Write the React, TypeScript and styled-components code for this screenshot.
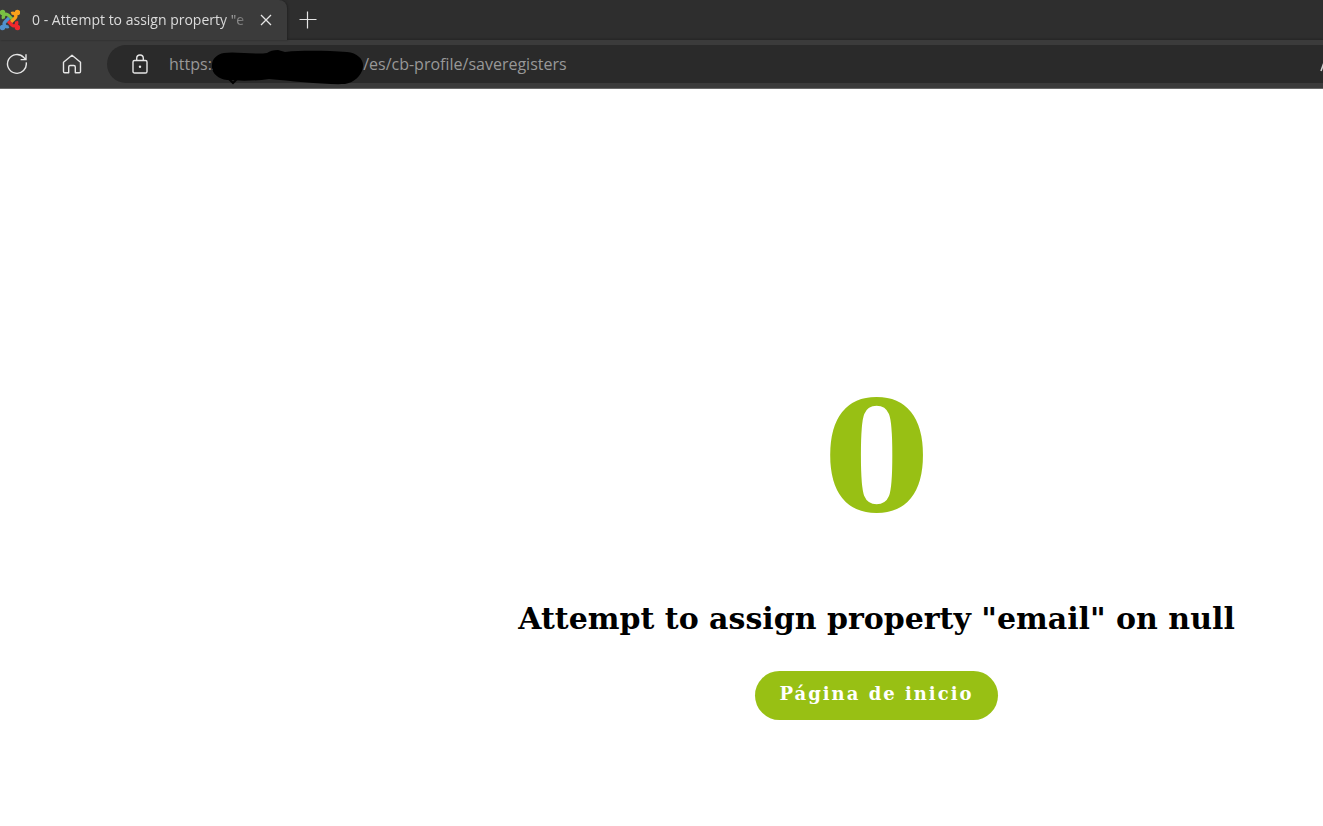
import React from "react";
import styled, { createGlobalStyle } from "styled-components";

const GlobalStyle = createGlobalStyle`
  * { box-sizing: border-box; }
  body {
    margin: 0;
    background: #fff;
    font-family: "Open Sans", "Noto Sans", sans-serif;
    overflow-x: hidden;
  }
`;

const Page = styled.div`
  display: flex;
  flex-direction: column;
  min-height: 100vh;
`;

const TabStrip = styled.div`
  display: flex;
  align-items: center;
  height: 40px;
  background: #2e2e2e;
  box-shadow: inset 0 -2px 2px -1px #252525;
`;

const Tab = styled.div`
  display: flex;
  align-items: center;
  align-self: stretch;
  width: 287px;
  padding-right: 12px;
  background: #3b3b3b;
  border-top-right-radius: 8px;
  box-shadow: 1px 0 2px #222;
`;

const TabTitle = styled.span`
  width: 218px;
  margin-left: 12px;
  overflow: hidden;
  white-space: nowrap;
  font-size: 14px;
  line-height: 20px;
  color: #dcdcdc;
  mask-image: linear-gradient(to right, #000 190px, transparent 222px);
`;

const IconButton = styled.button<{ $size: number }>`
  display: flex;
  flex: none;
  align-items: center;
  justify-content: center;
  width: ${(p) => p.$size}px;
  height: ${(p) => p.$size}px;
  padding: 0;
  border: 0;
  background: none;
  color: #e6e6e6;
`;

const CloseButton = styled(IconButton)`
  margin-left: 8px;
`;

const NewTabButton = styled(IconButton)`
  margin-left: 4px;
`;

const Toolbar = styled.div`
  display: flex;
  align-items: center;
  height: 49px;
  padding-bottom: 1px;
  background: #3b3b3b;
  border-bottom: 1px solid #686868;
`;

const NavButtons = styled.div`
  display: flex;
  flex: none;
  gap: 21px;
  width: 107px;
`;

const AddressBar = styled.form`
  position: relative;
  display: flex;
  flex: 1;
  align-items: center;
  height: 38px;
  padding-left: 16px;
  border-radius: 19px 0 0 19px;
  background: #2a2a2a;
`;

const AddressInput = styled.input`
  flex: 1;
  min-width: 0;
  height: 38px;
  margin-left: 12px;
  padding: 0;
  border: 0;
  outline: 0;
  background: none;
  font-family: "Open Sans", "Noto Sans", sans-serif;
  font-size: 16px;
  color: #989898;
`;

const Scribble = styled.svg`
  position: absolute;
  left: 104px;
  top: 4px;
`;

const ReaderButton = styled.button`
  display: flex;
  flex: none;
  width: 3px;
  padding: 0;
  border: 0;
  background: none;
  color: #cfcfcf;
  overflow: hidden;
`;

const Content = styled.main`
  display: flex;
  flex: 1;
  flex-direction: column;
  align-items: center;
  padding: 268px 0 40px 430px;
  font-family: "DejaVu Serif", serif;
  font-weight: 700;
`;

const ErrorCode = styled.h1`
  margin: 0;
  font-size: 154px;
  line-height: 200px;
  color: #98c014;
`;

const Message = styled.h2`
  margin: 42px 0 0;
  font-size: 30px;
  line-height: 40px;
  white-space: nowrap;
  color: #000;
`;

const HomeLink = styled.a`
  margin-top: 32px;
  padding: 8px 24px 12px;
  border-radius: 25px;
  background: #98c014;
  color: #fff;
  font-size: 18px;
  line-height: 29px;
  letter-spacing: 2px;
  text-decoration: none;
  white-space: nowrap;
`;

const logoArms = [
  { color: "#7ac143", angle: 0 },
  { color: "#f9a01b", angle: 90 },
  { color: "#f0282d", angle: 180 },
  { color: "#5091cd", angle: 270 },
];

function JoomlaLogo() {
  return (
    <svg width="20" height="22" viewBox="1 0 22 24" aria-hidden="true">
      {logoArms.map(({ color, angle }) => (
        <g key={color} transform={`rotate(${angle} 12 12)`}>
          <circle cx="3.8" cy="3.8" r="3" fill={color} />
          <path
            d="M4.9 10.6C3.5 7 7.2 3.8 10.1 6.7L14.4 11"
            fill="none"
            stroke={color}
            strokeWidth="3.6"
          />
        </g>
      ))}
    </svg>
  );
}

const hiddenHost = "\u00a0".repeat(35);

export default function App() {
  return (
    <Page>
      <GlobalStyle />
      <header>
        <TabStrip>
          <Tab>
            <JoomlaLogo />
            <TabTitle>0 - Attempt to assign property "e</TabTitle>
            <CloseButton $size={16} aria-label="Close tab">
              <svg width="12" height="12" viewBox="0 0 12 12" stroke="currentColor" strokeWidth="1.3">
                <path d="M1 1l10 10M11 1L1 11" />
              </svg>
            </CloseButton>
          </Tab>
          <NewTabButton $size={34} aria-label="New tab">
            <svg width="18" height="18" viewBox="0 0 18 18" stroke="currentColor" strokeWidth="1.2">
              <path d="M8.5 .5v17M.5 8.5h17" />
            </svg>
          </NewTabButton>
        </TabStrip>
        <Toolbar>
          <NavButtons>
            <IconButton $size={34} aria-label="Reload">
              <svg width="22" height="22" viewBox="0 0 22 22" fill="none" stroke="currentColor" strokeWidth="1.4">
                <path d="M20.2 9.4A9.4 9.4 0 1 1 17.8 4.5L19.6 6.4M20 1.2v5.4h-5.4" />
              </svg>
            </IconButton>
            <IconButton $size={34} aria-label="Home">
              <svg width="20" height="20" viewBox="0 0 20 20" fill="none" stroke="currentColor" strokeWidth="1.4" strokeLinejoin="round">
                <path d="M10 1.2L1.5 8.2V17.6Q1.5 18.8 2.7 18.8H6.7V13Q6.7 11.5 8.2 11.5H11.8Q13.3 11.5 13.3 13V18.8H17.3Q18.5 18.8 18.5 17.6V8.2Z" />
              </svg>
            </IconButton>
          </NavButtons>
          <AddressBar>
            <IconButton $size={34} type="button" aria-label="Site information">
              <svg width="16" height="20" viewBox="0 0 16 20" fill="none" stroke="currentColor" strokeWidth="1.4">
                <rect x="1" y="6.5" width="14" height="12.5" rx="1.6" />
                <path d="M4.7 6.5V4.3a3.3 3.3 0 0 1 6.6 0v2.2" />
                <circle cx="8" cy="12.7" r="1.2" fill="currentColor" stroke="none" />
              </svg>
            </IconButton>
            <AddressInput
              aria-label="Address"
              readOnly
              value={`https:/${hiddenHost}/es/cb-profile/saveregisters`}
            />
            <Scribble width="154" height="36" viewBox="0 0 154 36" aria-hidden="true">
              <path d="M13 4C24 2 44 6 56 4Q60 1 67 1L74 3C94 1 118 2 136 3C147 4 153 11 152 18C151 27 142 34 134 35C115 36 81 32 58 30C45 32 29 32 16 31C7 30 0 24 1 16C1 10 6 5 13 4Z" />
              <path d="M18 30l4 4 4-4" fill="none" stroke="#000" strokeWidth="2" />
            </Scribble>
            <ReaderButton type="button" aria-label="Read aloud">
              <svg width="16" height="18" viewBox="0 0 16 18" style={{ flex: "none" }} fill="none" stroke="currentColor" strokeWidth="1.6">
                <path d="M1 16L6 2l5 14M3 11h6" />
              </svg>
            </ReaderButton>
          </AddressBar>
        </Toolbar>
      </header>
      <Content>
        <ErrorCode>0</ErrorCode>
        <Message>Attempt to assign property "email" on null</Message>
        <HomeLink href="#">Página de inicio</HomeLink>
      </Content>
    </Page>
  );
}
